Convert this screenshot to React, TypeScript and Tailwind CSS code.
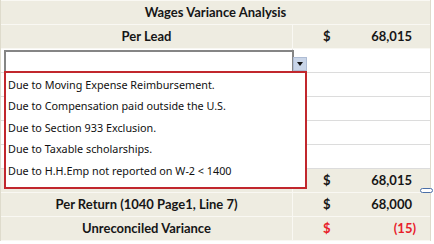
const beige = "bg-[#eeece1]";

type Amount = { value: string; red?: boolean; negative?: boolean };

const Row = ({ label, amount }: { label?: string; amount?: Amount }) => (
  <div className={`flex h-[24px] border-b border-[#f9f8f3] ${beige}`}>
    <div className="w-[292px] flex items-center justify-center border-r border-[#f9f8f3] font-bold">
      {label}
    </div>
    {amount && (
      <div
        className={`flex-1 flex items-center justify-between pl-[30px] font-bold ${
          amount.negative ? "pr-[14px]" : "pr-[18px]"
        } ${amount.red ? "text-[#e8202a]" : ""}`}
      >
        <span>$</span>
        <span>{amount.value}</span>
      </div>
    )}
  </div>
);

const WhiteRow = () => (
  <div className="flex h-[24px] border-b border-[#dcdcdc] bg-white">
    <div className="w-[292px] border-r border-[#dcdcdc]" />
    <div className="flex-1" />
  </div>
);

const options = [
  "Due to Moving Expense Reimbursement.",
  "Due to Compensation paid outside the U.S.",
  "Due to Section 933 Exclusion.",
  "Due to Taxable scholarships.",
  "Due to H.H.Emp not reported on W-2 < 1400",
];

export default function App() {
  return (
    <div className="w-[434px] h-[244px] bg-white overflow-hidden">
      <div
        className="relative w-[431px] border-l border-r border-[#dedbcc] text-[13px] text-[#161616]"
        style={{ fontFamily: "Lato, 'Liberation Sans', sans-serif" }}
      >
        <div className={`h-[25px] flex items-center justify-center border-t border-b border-[#f9f8f3] font-bold ${beige}`}>
          Wages Variance Analysis
        </div>
        <Row label="Per Lead" amount={{ value: "68,015" }} />
        <WhiteRow />
        <WhiteRow />
        <WhiteRow />
        <WhiteRow />
        <WhiteRow />
        <Row amount={{ value: "68,015" }} />
        <Row label="Per Return (1040 Page1, Line 7)" amount={{ value: "68,000" }} />
        <Row label="Unreconciled Variance" amount={{ value: "(15)", red: true, negative: true }} />

        {/* selected cell */}
        <div className="absolute left-[3px] top-[50px] w-[290px] h-[24px] border-2 border-[#858585]" />
        {/* dropdown button */}
        <div className="absolute left-[292px] top-[57px] w-[14px] h-[14px] bg-[#c9d5e8] border border-[#aebcd4] flex items-center justify-center">
          <span className="w-0 h-0 border-l-[3.5px] border-r-[3.5px] border-t-[4px] border-l-transparent border-r-transparent border-t-[#111]" />
        </div>
        {/* list */}
        <div
          className="absolute left-[3px] top-[71px] w-[303px] h-[118px] border-2 border-[#c1272d] bg-white pt-[1px] pl-[2px] text-[10.8px] text-[#111]"
          style={{ fontFamily: "'Noto Sans', 'Open Sans', sans-serif" }}
        >
          {options.map((o) => (
            <div key={o} className="h-[21.6px] flex items-center whitespace-nowrap">
              {o}
            </div>
          ))}
        </div>
        {/* small oval handle */}
        <div className="absolute left-[419px] top-[188px] w-[13px] h-[5px] rounded-full border border-[#4a6fa8] bg-white" />
      </div>
    </div>
  );
}
